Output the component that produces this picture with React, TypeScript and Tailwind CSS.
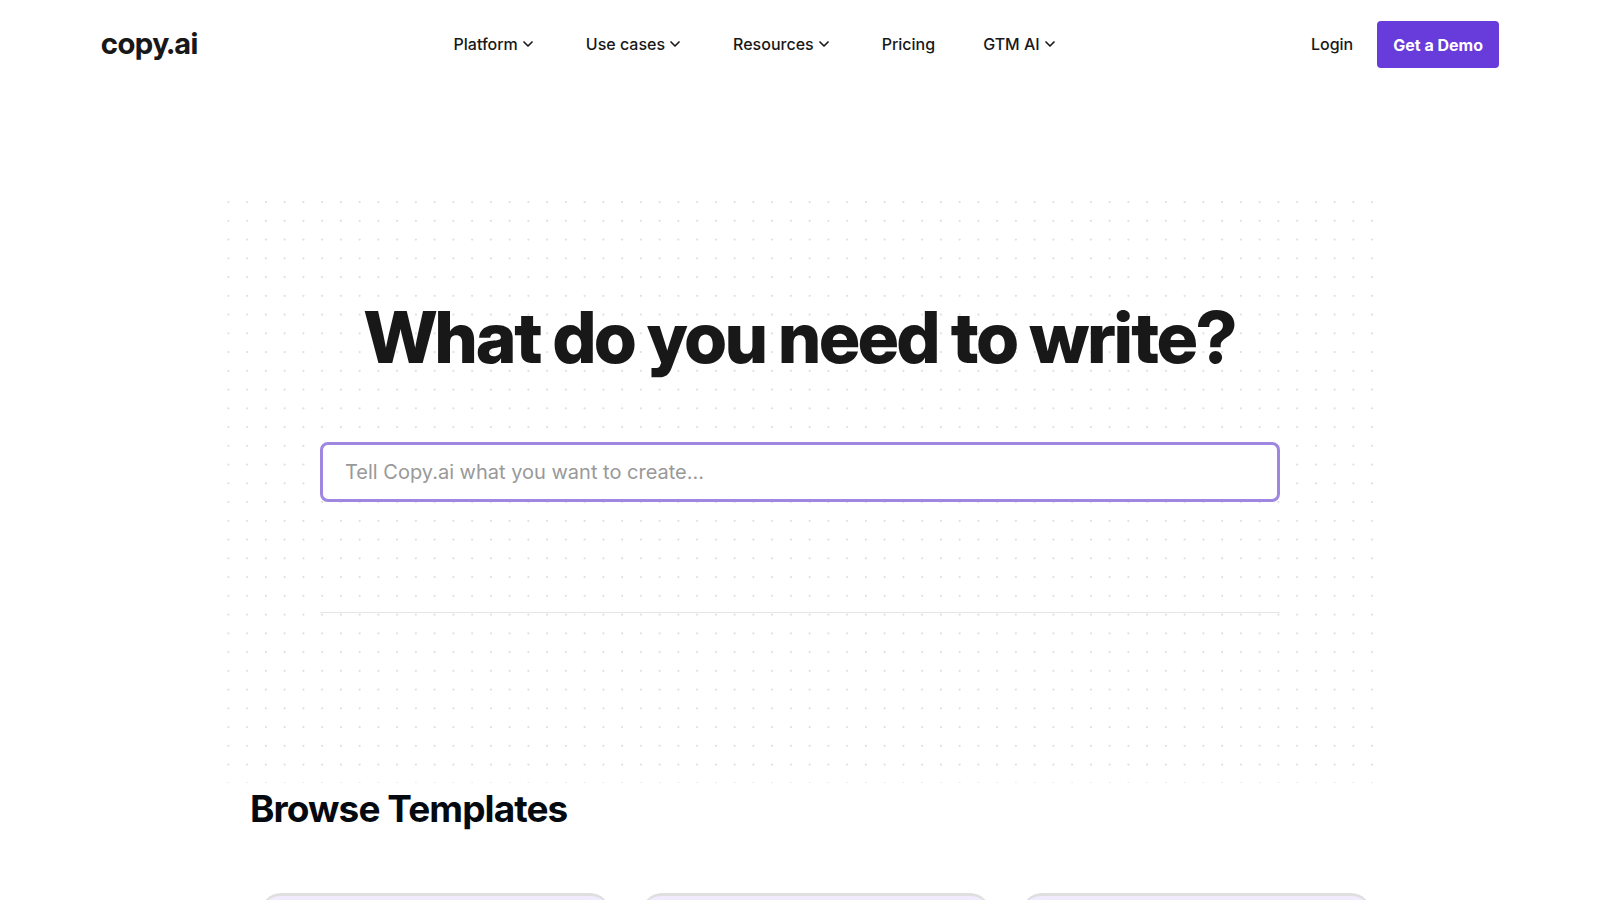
import { ChevronDown } from "lucide-react";

const navItems = [
  { label: "Platform", menu: true },
  { label: "Use cases", menu: true },
  { label: "Resources", menu: true },
  { label: "Pricing", menu: false },
  { label: "GTM AI", menu: true },
];

const templateCards = ["first", "second", "third"];

const dotSteps = [0, 1, 2, 3];

function DotGrid() {
  return (
    <svg aria-hidden="true" className="absolute inset-0 -z-10 h-full w-full">
      <defs>
        <pattern id="dots" width="75" height="75" patternUnits="userSpaceOnUse" viewBox="0 0 400 400">
          {dotSteps.map((row) =>
            dotSteps.map((col) => (
              <circle key={`${row}-${col}`} cx={col * 100 + 50} cy={row * 100 + 48} r="6" fill="#e0e0e0" />
            )),
          )}
        </pattern>
      </defs>
      <rect width="100%" height="100%" fill="url(#dots)" />
    </svg>
  );
}

function Header() {
  return (
    <header className="mx-auto flex h-[88px] w-full max-w-[1398px] items-center justify-between">
      <a href="#home" className="pr-1 pb-0.5 font-['Inter_Display','Inter',sans-serif] text-[30px] leading-10 font-bold">
        copy.ai
      </a>
      <nav aria-label="Main" className="flex items-center gap-12">
        {navItems.map((item) =>
          item.menu ? (
            <button key={item.label} type="button" className="flex items-center gap-0.5 pr-0.5 font-medium">
              {item.label}
              <ChevronDown size={16} strokeWidth={2.5} aria-hidden="true" />
            </button>
          ) : (
            <a key={item.label} href="#pricing" className="font-medium">
              {item.label}
            </a>
          ),
        )}
      </nav>
      <div className="flex items-center gap-6">
        <a href="#login" className="font-medium">
          Login
        </a>
        <a href="#demo" className="rounded bg-[#683bdb] px-4 pt-[13px] pb-[11px] leading-[23px] font-bold text-white">
          Get a Demo
        </a>
      </div>
    </header>
  );
}

export default function App() {
  return (
    <div className="h-screen overflow-hidden bg-white font-['Inter',sans-serif] text-base text-[#181818]">
      <Header />
      <main>
        <section className="relative isolate mx-auto mt-[105px] h-[590px] w-full max-w-[1162px] px-[101px] pt-[104px]">
          <DotGrid />
          <h1 className="text-center font-['Inter_Display','Inter',sans-serif] text-[71px] leading-20 font-extrabold tracking-tight">
            What do you need to write?
          </h1>
          <input
            type="text"
            aria-label="What do you want to create?"
            placeholder="Tell Copy.ai what you want to create..."
            className="mt-[65px] block h-[60px] w-full rounded-lg border-3 border-[#9f86e0] bg-white px-[22px] text-xl outline-none placeholder:text-[#999999]"
          />
          <hr className="mt-[110px] border-[#e6e6e6]" />
        </section>
        <section className="mx-auto w-full max-w-[1142px]">
          <h2 className="pl-[21px] text-[37px] leading-13 font-bold tracking-tight text-[#050a10]">Browse Templates</h2>
          <div className="mt-[58px] grid grid-cols-3 gap-8 pl-8">
            {templateCards.map((card) => (
              <article key={card} className="h-64 rounded-[20px] border-t-3 border-[#dfdfdf] bg-[#f0ebfd]" />
            ))}
          </div>
        </section>
      </main>
    </div>
  );
}
